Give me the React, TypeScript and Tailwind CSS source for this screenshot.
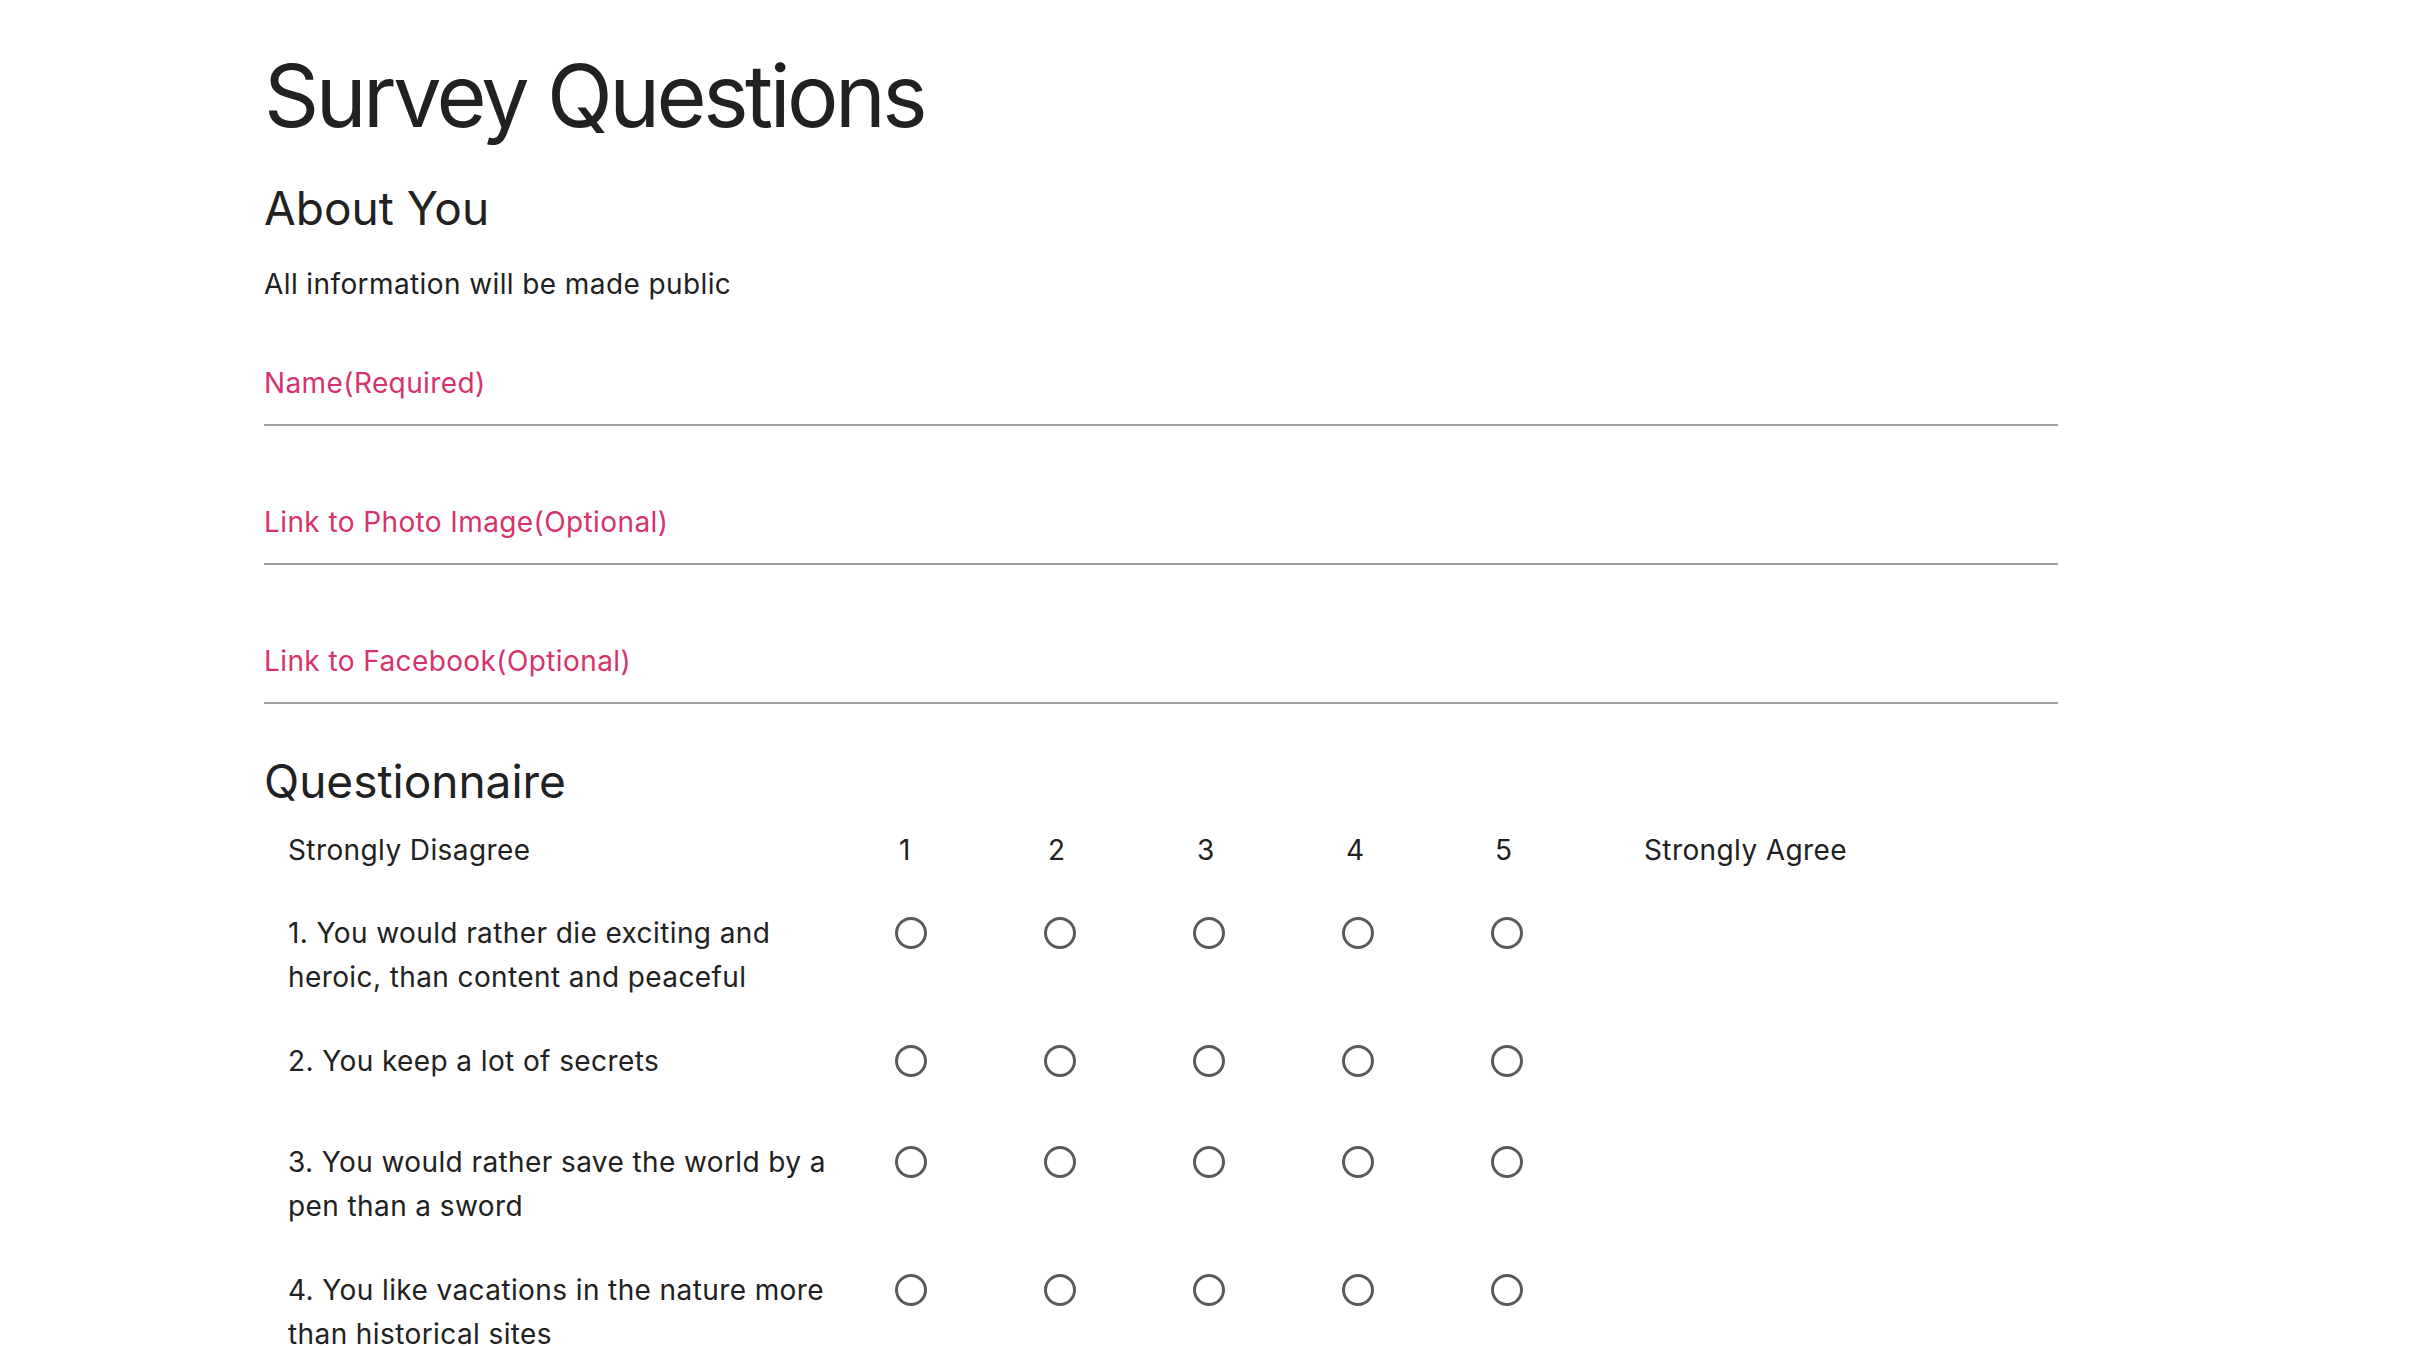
import React from 'react';

// Preguntas del cuestionario
const questions = [
  '1. You would rather die exciting and heroic, than content and peaceful',
  '2. You keep a lot of secrets',
  '3. You would rather save the world by a pen than a sword',
  '4. You like vacations in the nature more than historical sites',
];

const fields = ['Name(Required)', 'Link to Photo Image(Optional)', 'Link to Facebook(Optional)'];

const Radio: React.FC = () => (
  <div className="h-[61px] pl-[25px]">
    <div className="mt-[6px] w-[32px] h-[32px] rounded-full border-[3px] border-[#5a5a5a]" />
  </div>
);

const App: React.FC = () => {
  return (
    <div className="min-h-screen bg-white text-[#212121] font-['Inter','Noto_Sans',sans-serif]">
      <div className="ml-[264px] w-[1794px] pt-[50px]">
        <h1 className="text-[86px] leading-[92px] font-normal tracking-[-3.5px]">Survey Questions</h1>
        <h2 className="mt-[43px] text-[46px] leading-[46px]">About You</h2>
        <p className="mt-[31px] text-[28px] leading-[44px] tracking-[0.4px]">All information will be made public</p>

        {/* Campos del formulario */}
        <div className="mt-[55px]">
          {fields.map((label, i) => (
            <div key={label} className={i > 0 ? 'mt-[74px]' : ''}>
              <label className="block text-[28px] leading-[44px] tracking-[0.4px] text-[#d6336c]">{label}</label>
              <div className="mt-[19px] h-[2px] bg-[#9e9e9e]" />
            </div>
          ))}
        </div>

        <h2 className="mt-[54px] text-[46px] leading-[46px]">Questionnaire</h2>

        {/* Tabla de escala */}
        <div className="text-[28px] leading-[44px] tracking-[0.4px]">
          <div className="grid grid-cols-[606px_149px_149px_149px_149px_149px_1fr] items-start pt-[24px] pb-[19px]">
            <div className="pl-[24px]">Strongly Disagree</div>
            {[1, 2, 3, 4, 5].map((n) => (
              <div key={n} className="pl-[29px]">{n}</div>
            ))}
            <div className="pl-[29px]">Strongly Agree</div>
          </div>
          {questions.map((q) => (
            <div key={q} className="grid grid-cols-[606px_149px_149px_149px_149px_149px_1fr] items-start py-[20px]">
              <div className="pl-[24px] pr-[24px]">{q}</div>
              {[1, 2, 3, 4, 5].map((n) => (
                <Radio key={n} />
              ))}
              <div />
            </div>
          ))}
        </div>
      </div>
    </div>
  );
};

export default App;
